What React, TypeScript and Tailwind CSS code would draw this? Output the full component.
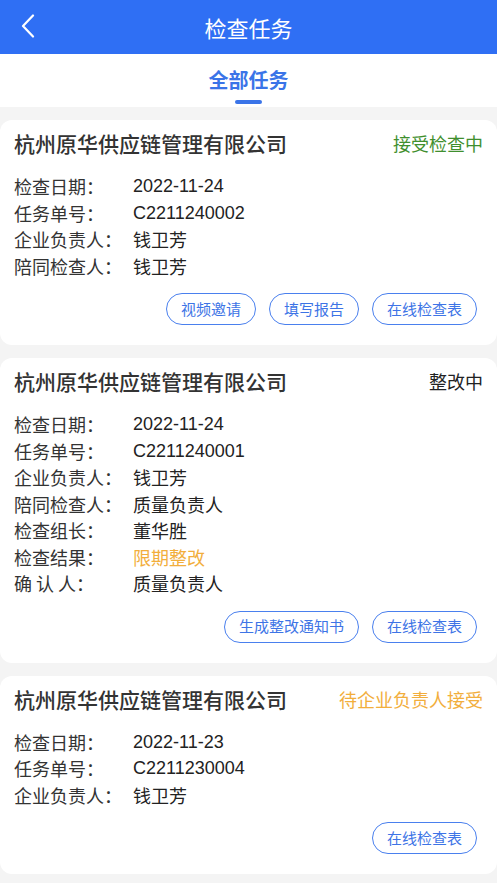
import React from "react";

type Row = { label: string; value: string; valueClass?: string };
type Task = {
  status: string;
  statusClass: string;
  rows: Row[];
  buttons: string[];
};

const tasks: Task[] = [
  {
    status: "接受检查中",
    statusClass: "text-[#3f8f2e]",
    rows: [
      { label: "检查日期：", value: "2022-11-24" },
      { label: "任务单号：", value: "C2211240002" },
      { label: "企业负责人：", value: "钱卫芳" },
      { label: "陪同检查人：", value: "钱卫芳" },
    ],
    buttons: ["视频邀请", "填写报告", "在线检查表"],
  },
  {
    status: "整改中",
    statusClass: "text-[#222222]",
    rows: [
      { label: "检查日期：", value: "2022-11-24" },
      { label: "任务单号：", value: "C2211240001" },
      { label: "企业负责人：", value: "钱卫芳" },
      { label: "陪同检查人：", value: "质量负责人" },
      { label: "检查组长：", value: "董华胜" },
      { label: "检查结果：", value: "限期整改", valueClass: "text-[#f2ae3c]" },
      { label: "确 认 人：", value: "质量负责人" },
    ],
    buttons: ["生成整改通知书", "在线检查表"],
  },
  {
    status: "待企业负责人接受",
    statusClass: "text-[#f2ae3c]",
    rows: [
      { label: "检查日期：", value: "2022-11-23" },
      { label: "任务单号：", value: "C2211230004" },
      { label: "企业负责人：", value: "钱卫芳" },
    ],
    buttons: ["在线检查表"],
  },
];

const isAscii = (s: string) => /^[\x00-\x7f]*$/.test(s);

function Card({ t }: { t: Task }) {
  return (
    <div className="bg-white rounded-[12px] pt-[11px] pb-[20px] px-[14px]">
      <div className="flex items-center justify-between h-[24px]">
        <div className="text-[21px] font-medium text-[#333333] leading-[24px]">
          杭州原华供应链管理有限公司
        </div>
        <div className={"text-[18px] leading-[24px] " + t.statusClass}>{t.status}</div>
      </div>
      <div className="mt-[18px] flex flex-col">
        {t.rows.map((r, i) => (
          <div key={i} className="flex items-center text-[18px] h-[26.5px]">
            <div className="w-[119px] text-[#333333] whitespace-pre leading-[26px]">{r.label}</div>
            <div
              className={(r.valueClass ?? "text-[#222222]") + " leading-[26px]"}
              style={
                isAscii(r.value)
                  ? { fontFamily: '"Liberation Sans", "Noto Sans CJK SC", sans-serif' }
                  : undefined
              }
            >
              {r.value}
            </div>
          </div>
        ))}
      </div>
      <div className="mt-[14px] flex justify-end gap-[13px] pr-[6px]">
        {t.buttons.map((b) => (
          <div
            key={b}
            className="h-[32px] px-[14px] rounded-full border-[1.5px] border-[#4a80ee] text-[#3d74e6] text-[15px] flex items-center justify-center"
          >
            {b}
          </div>
        ))}
      </div>
    </div>
  );
}

export default function App() {
  return (
    <div
      className="w-[497px] min-h-[883px] bg-[#f4f4f4]"
      style={{ fontFamily: '"Noto Sans CJK SC", "Noto Sans", sans-serif' }}
    >
      <div className="h-[54px] bg-[#2f6ff4] flex items-center relative">
        <div className="absolute left-[20px] top-[14px]">
          <svg width="16" height="24" viewBox="0 0 16 24" fill="none">
            <polyline
              points="13,1.5 3,12 13,22.5"
              stroke="white"
              strokeWidth="2.2"
              strokeLinecap="round"
              strokeLinejoin="round"
            />
          </svg>
        </div>
        <div className="flex-1 text-center text-white text-[22px]">检查任务</div>
      </div>
      <div className="h-[53px] bg-white flex flex-col items-center">
        <div className="mt-[13px] text-[20px] font-semibold text-[#3a74e8] leading-[26px]">全部任务</div>
        <div className="mt-[7px] w-[27px] h-[4px] rounded-full bg-[#3a74e8]" />
      </div>
      <div className="pt-[13px] flex flex-col gap-[13px] pb-[9px]">
        {tasks.map((t, i) => (
          <Card key={i} t={t} />
        ))}
      </div>
    </div>
  );
}
